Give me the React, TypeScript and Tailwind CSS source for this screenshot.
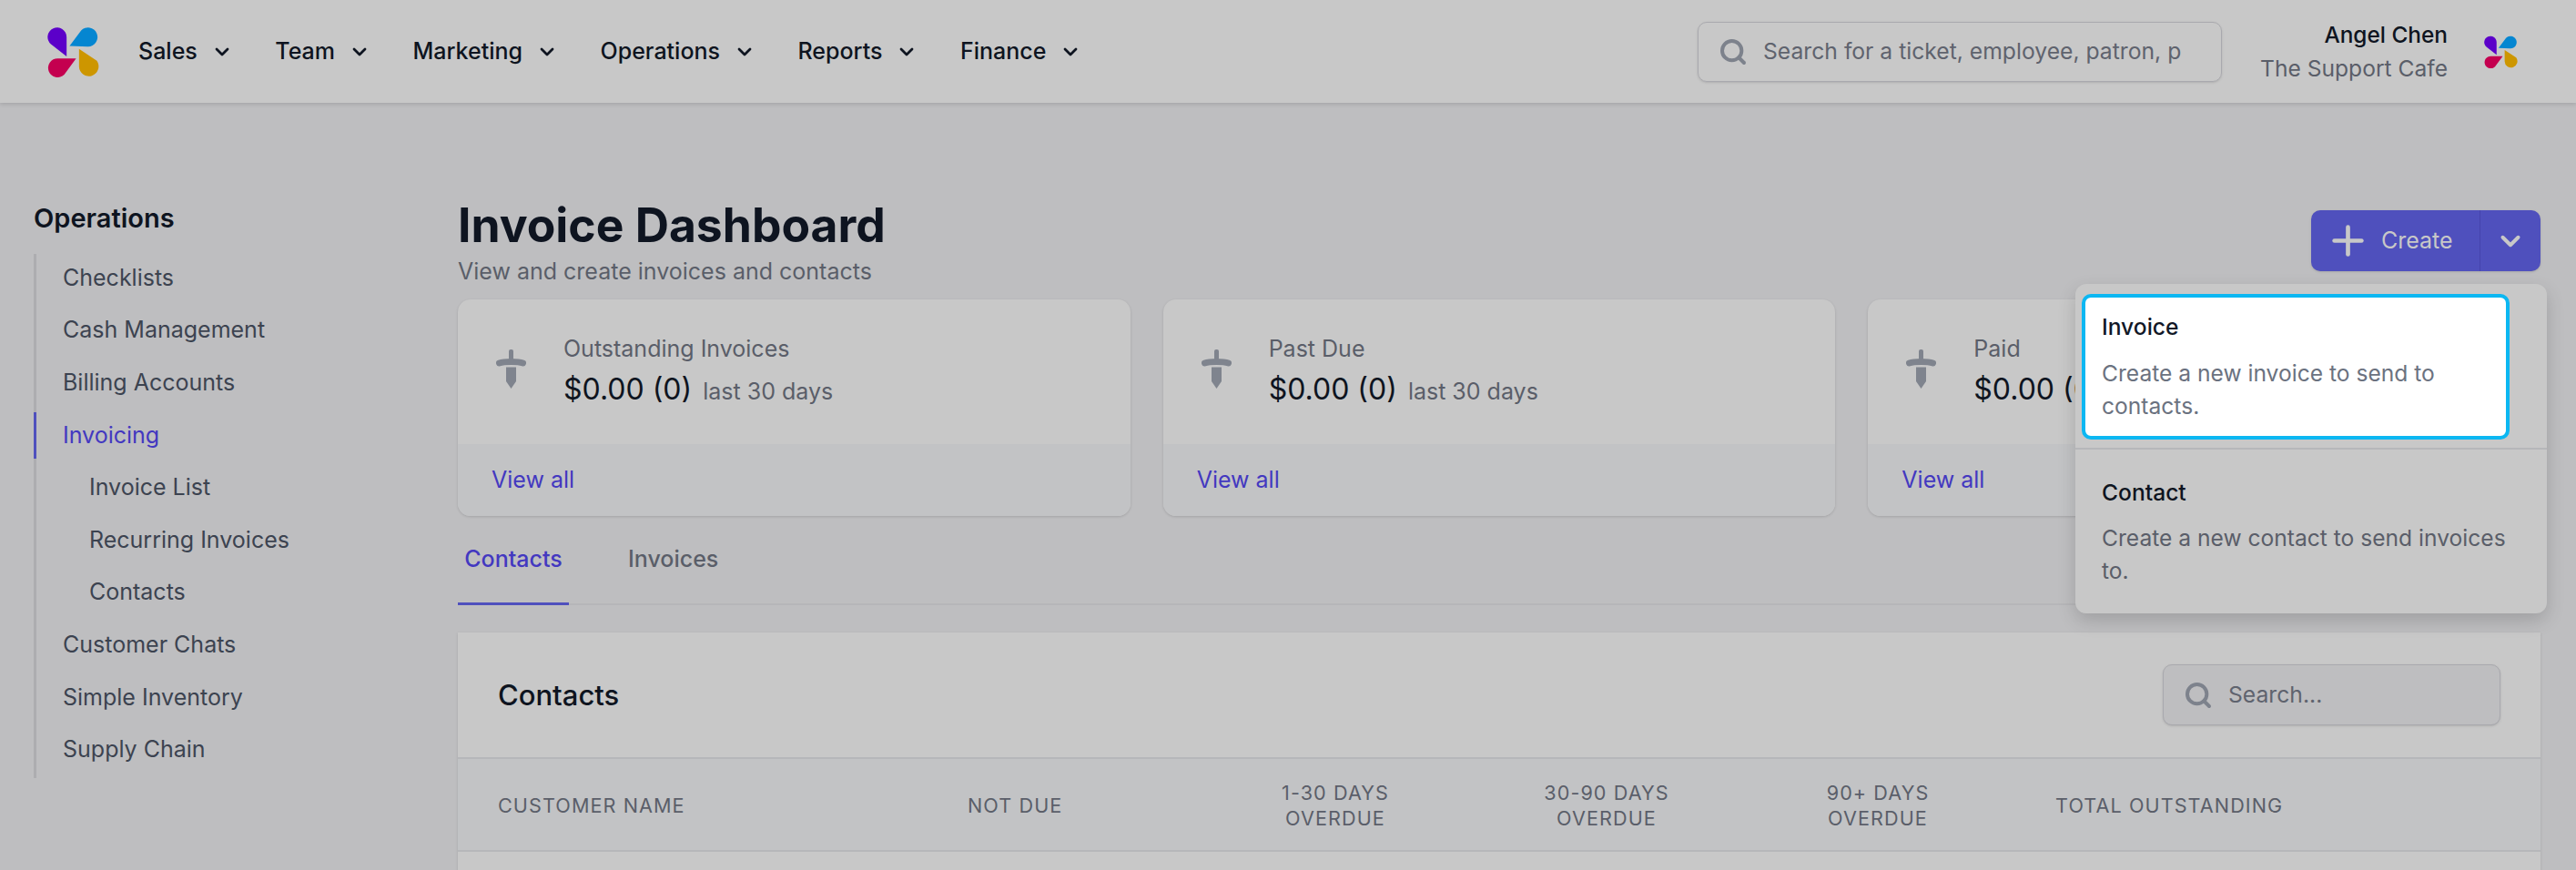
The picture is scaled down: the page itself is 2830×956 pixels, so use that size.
import { ChevronDown, Plus, Search } from "lucide-react";

const navItems = [
  { label: "Sales", margin: "mr-[46.5px]" },
  { label: "Team", margin: "mr-[46.5px]" },
  { label: "Marketing", margin: "mr-[46.5px]" },
  { label: "Operations", margin: "mr-[46.5px]" },
  { label: "Reports", margin: "mr-[46.5px]" },
  { label: "Finance", margin: "" }
];

const sideItems = [
  { label: "Checklists" },
  { label: "Cash Management" },
  { label: "Billing Accounts" },
  { label: "Invoicing", active: true },
  { label: "Invoice List", sub: true },
  { label: "Recurring Invoices", sub: true },
  { label: "Contacts", sub: true },
  { label: "Customer Chats" },
  { label: "Simple Inventory" },
  { label: "Supply Chain" }
];

const cards = ["Outstanding Invoices", "Past Due", "Paid"];

function Logo({ className }: { className: string }) {
  return (
    <svg viewBox="95 50 175 170" className={className}>
      <path d="M160 150L107 109A32 32 0 1 1 160 85Z" fill="#5b00c9" />
      <path d="M170 115L232 117A32 32 0 1 0 209 63Z" fill="#0586d1" />
      <path d="M192 157L130 157A32 32 0 1 0 152 212Z" fill="#c4004f" />
      <path d="M202 125L202 185A33 33 0 1 0 262 165Z" fill="#cd9600" />
    </svg>
  );
}

function Sword() {
  return (
    <svg viewBox="0 0 33 43" className="-mt-[5px] h-[43px] w-[33px] shrink-0" fill="#7f848e">
      <rect x="14" y="0" width="5" height="12" rx="2" />
      <path d="M3.5 15C9 13 24 13 29.5 15" fill="none" stroke="#7f848e" strokeWidth="7" strokeLinecap="round" />
      <path d="M11 19.5H22V35L16.5 43L11 35Z" />
    </svg>
  );
}

function SearchBox({ placeholder, className }: { placeholder: string; className: string }) {
  return (
    <div className={`flex items-center rounded-[10px] border border-[#a9a9ae] shadow-sm ${className}`}>
      <Search className="h-[32px] w-[32px] shrink-0 text-[#7d828c]" strokeWidth={3} />
      <span className="ml-[17px] whitespace-nowrap text-[24.7px] text-[#5f636e]">{placeholder}</span>
    </div>
  );
}

export default function App() {
  return (
    <div className="relative h-[956px] w-full overflow-hidden bg-[#bebec0] font-['Inter',sans-serif] text-[25px] text-[#0e1420]">
      <header className="flex h-[113px] items-center bg-[#c8c8c8] pl-[52px] pr-[64px] shadow-[0_2px_4px_rgba(0,0,0,0.12)]">
        <Logo className="mr-[43px] h-[56px] w-[57px] shrink-0" />
        <nav className="flex items-center">
          {navItems.map((item) => (
            <div key={item.label} className={`flex items-center gap-[15px] font-medium ${item.margin}`}>
              <span>{item.label}</span>
              <ChevronDown className="h-[24px] w-[24px]" strokeWidth={2.8} />
            </div>
          ))}
        </nav>
        <SearchBox
          placeholder="Search for a ticket, employee, patron, p"
          className="ml-auto h-[66px] w-[576px] pl-[22px]"
        />
        <div className="ml-[42px] text-right text-[24.6px]">
          <p className="text-[24.4px] font-medium leading-[37px]">Angel Chen</p>
          <p className="leading-[37px] text-[#5a5e69]">The Support Cafe</p>
        </div>
        <Logo className="ml-[40px] h-[36px] w-[37px] shrink-0" />
      </header>

      <div className="flex">
        <aside className="w-[503px] shrink-0 pl-[37px] pt-[108px]">
          <h2 className="text-[29px] font-semibold leading-[38px]">Operations</h2>
          <ul className="mt-[20px] flex w-fit min-w-[340px] flex-col gap-[6.6px] border-l-[3px] border-[#adadb0] pb-[6px] pt-[1px]">
            {sideItems.map((item) => (
              <li
                key={item.label}
                className={`-ml-[3px] flex h-[51px] items-center border-l-[3px] ${
                  item.active ? "border-[#4f50bd] text-[#4338c0]" : "border-transparent text-[#3c4350]"
                } ${item.sub ? "pl-[58px]" : "pl-[29px]"}`}
              >
                {item.label}
              </li>
            ))}
          </ul>
        </aside>

        <main className="min-w-0 flex-1 pr-[39px] pt-[110px]">
          <div className="flex items-start justify-between">
            <div>
              <h1 className="text-[51.6px] font-bold leading-[48px]">Invoice Dashboard</h1>
              <p className="mt-[9px] leading-[36px] text-[#5a5e69]">View and create invoices and contacts</p>
            </div>
            <div className="mt-[8px] flex h-[67px] w-[252px] items-stretch rounded-[10px] bg-[#4f50bd] text-[#c8c8c8] shadow-sm">
              <div className="flex flex-1 items-center gap-[11px] border-r border-[#4543ad] pl-[15px]">
                <Plus className="h-[51px] w-[51px] shrink-0" strokeWidth={2.2} />
                <span>Create</span>
              </div>
              <div className="flex w-[66px] items-center justify-center">
                <ChevronDown className="h-[34px] w-[34px]" strokeWidth={2.8} />
              </div>
            </div>
          </div>

          <div className="mt-[13px] grid grid-cols-3 gap-[36px]">
            {cards.map((label) => (
              <div key={label} className="overflow-hidden rounded-[14px] bg-[#c8c8c8] shadow-[0_1px_3px_rgba(0,0,0,0.15)]">
                <div className="flex h-[159px] items-center pb-[2px] pl-[42px]">
                  <Sword />
                  <div className="ml-[41px]">
                    <p className="leading-[36px] text-[#5a5e69]">{label}</p>
                    <p className="mt-[7px] flex items-baseline leading-[40px]">
                      <span className="text-[32px]">$0.00 (0)</span>
                      <span className="ml-[12px] text-[#5a5e69]">last 30 days</span>
                    </p>
                  </div>
                </div>
                <div className="flex h-[79px] items-center bg-[#c2c3c5] pl-[37px] text-[#4338c0]">View all</div>
              </div>
            ))}
          </div>

          <div className="mt-[20px] flex h-[78px] items-stretch border-b-[2px] border-[#b6b6b9]">
            <div className="-mb-[2px] flex w-[122px] items-center justify-center border-b-[3px] border-[#4f50bd] pb-[20px] font-medium text-[#4338c0]">
              Contacts
            </div>
            <div className="ml-[65px] flex items-center pb-[20px] font-medium text-[#5a5e69]">Invoices</div>
          </div>

          <section className="mt-[30px] bg-[#c8c8c8] shadow-[0_1px_3px_rgba(0,0,0,0.12)]">
            <div className="flex h-[139px] items-center justify-between border-b-[2px] border-[#b6b7ba] px-[44px]">
              <h3 className="pt-[2px] text-[31px] font-medium">Contacts</h3>
              <SearchBox placeholder="Search..." className="h-[67px] w-[371px] bg-[#bebec0] pl-[22px]" />
            </div>
            <div className="grid h-[102px] grid-cols-[516px_255px_298px_298px_298px_1fr] items-center border-b-[2px] border-[#b6b7ba] bg-[#c2c3c5] pl-[44px] pt-[2px] text-[21.6px] uppercase leading-[28px] tracking-[0.05em] text-[#5a5e69]">
              <span>Customer Name</span>
              <span>Not Due</span>
              <span className="text-center">1-30 Days<br />Overdue</span>
              <span className="text-center">30-90 Days<br />Overdue</span>
              <span className="text-center">90+ Days<br />Overdue</span>
              <span className="pl-[46px]">Total Outstanding</span>
            </div>
            <div className="h-[40px]" />
          </section>
        </main>
      </div>

      {/* open create menu */}
      <div className="absolute left-[2280px] top-[312px] w-[518px] rounded-[12px] bg-[#c8c8c8] shadow-[0_8px_20px_rgba(0,0,0,0.16)]">
        <div className="border-b-[2px] border-[#b6b7ba] pb-[9px] pl-[7px] pt-[11px]">
          <div className="h-[160px] w-[470px] rounded-[10px] border-[4px] border-[#0cb7f2] bg-white pl-[18px] pt-[14px] text-[24.6px]">
            <p className="font-medium leading-[36px] text-[#111827]">Invoice</p>
            <p className="mt-[15px] leading-[36px] text-[#6b7280]">
              Create a new invoice to send to
              <br />
              contacts.
            </p>
          </div>
        </div>
        <div className="h-[180px] pl-[29px] pt-[29px] text-[24.6px]">
          <p className="font-medium leading-[36px]">Contact</p>
          <p className="mt-[14px] leading-[36px] text-[#5a5e69]">
            Create a new contact to send invoices
            <br />
            to.
          </p>
        </div>
      </div>
    </div>
  );
}
